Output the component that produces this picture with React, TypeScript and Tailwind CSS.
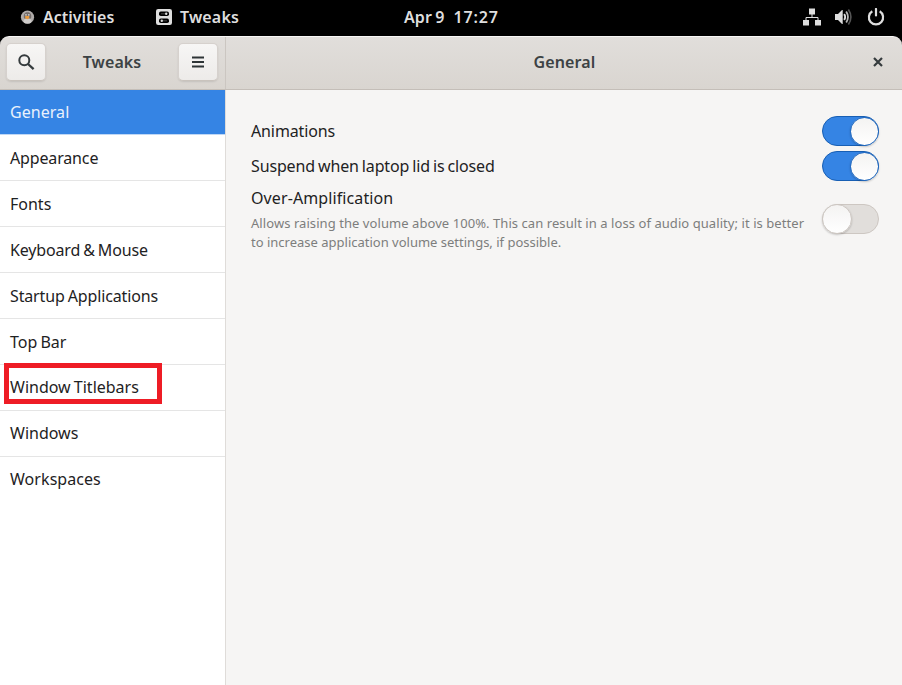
import React from "react";

const pages = [
  { label: "General", spacing: "tracking-[0.05px]" },
  { label: "Appearance", spacing: "tracking-[-0.15px]" },
  { label: "Fonts", spacing: "" },
  { label: "Keyboard & Mouse", spacing: "tracking-[-0.15px] [word-spacing:-1px]" },
  { label: "Startup Applications", spacing: "tracking-[-0.14px] [word-spacing:-1px]" },
  { label: "Top Bar", spacing: "[word-spacing:-1px]" },
  { label: "Window Titlebars", spacing: "[word-spacing:-1px]", marked: true },
  { label: "Windows", spacing: "" },
  { label: "Workspaces", spacing: "tracking-[0.06px]" },
];

function Switch({ on }: { on?: boolean }) {
  return (
    <div
      className={
        on
          ? "flex h-[30px] w-[57px] shrink-0 items-center justify-end rounded-full border border-[#185fb4] bg-[#3584e4]"
          : "flex h-[30px] w-[57px] shrink-0 items-center justify-start rounded-full border border-[#cdc7c2] bg-[#e1dedb]"
      }
    >
      <div
        className={
          on
            ? "-mr-px size-[29px] rounded-full border border-[#2268bd] bg-linear-to-b from-[#f4f3f2] to-white shadow-[0_1px_2px_rgba(0,0,0,0.2)]"
            : "-ml-px size-[30px] rounded-full border border-[#cdc7c2] bg-linear-to-b from-[#f4f3f2] to-white shadow-[0_1px_2px_rgba(0,0,0,0.2)]"
        }
      />
    </div>
  );
}

function HeaderButton({ children }: { children: React.ReactNode }) {
  return (
    <button className="flex h-[38px] w-10 items-center justify-center rounded-[5px] border border-[#d6d1cd] border-b-[#c9c3bd] bg-linear-to-b from-[#f7f6f5] to-[#edebe9] shadow-[0_1px_2px_rgba(0,0,0,0.1)]">
      {children}
    </button>
  );
}

function TopBar() {
  return (
    <div className="flex h-9 shrink-0 items-center bg-black text-[16px] leading-6 font-semibold text-[#dedede]">
      <div className="flex w-[155px] items-center pb-0.5 pl-5">
        <svg width="15" height="15" viewBox="0 0 15 15">
          <circle cx="7.5" cy="7.2" r="6.6" fill="#b0acaa" />
          <path d="M4 8.5C3 4 5 2.3 7.5 2.3S12 4 11 8.5z" fill="#736c69" />
          <ellipse cx="7.5" cy="11" rx="4" ry="2.6" fill="#cfcdcb" />
          <circle cx="6" cy="4.8" r="0.9" fill="#ccc" />
          <circle cx="8.8" cy="4.8" r="0.9" fill="#ccc" />
          <path d="M5.2 6h4v2.2l-2 1-2-1z" fill="#e99a3c" />
        </svg>
        <span className="ml-2 whitespace-nowrap">Activities</span>
      </div>
      <div className="flex w-[249px] items-center pb-0.5">
        <svg width="18" height="18" viewBox="0 0 18 18">
          <rect x="1" y="1" width="16" height="16" rx="2.2" fill="#dedede" />
          <rect x="4" y="3.6" width="10" height="4.4" rx="1.8" fill="#000" />
          <rect x="4" y="10.6" width="10" height="4.4" rx="1.8" fill="#000" />
          <path d="M6 5.8h4M8 12.8h4" stroke="#555" strokeWidth="0.8" />
          <circle cx="11.2" cy="5.8" r="1.2" fill="#dedede" />
          <circle cx="6.8" cy="12.8" r="1.2" fill="#dedede" />
        </svg>
        <span className="ml-[7px] tracking-[0.15px]">Tweaks</span>
      </div>
      <div className="flex gap-[9px] pb-0.5">
        <span className="tracking-[0.1px] [word-spacing:-1px]">Apr 9</span>
        <span className="tracking-[0.85px]">17:27</span>
      </div>
      <div className="ml-auto flex w-[99px] items-center pb-0.5">
        <svg width="18" height="18" viewBox="0 0 18 18" fill="#dedede">
          <rect x="6" y="0.5" width="6" height="6" />
          <rect x="0" y="12" width="6" height="5.5" />
          <rect x="12" y="12" width="6" height="5.5" />
          <path d="M3 12V9.5h12V12M9 6v3.5" fill="none" stroke="#dedede" />
        </svg>
        <svg className="ml-[14px]" width="18" height="18" viewBox="0 0 18 18">
          <path d="M0 6h3l4-4h.7v14H7l-4-4H0z" fill="#dedede" />
          <path d="M9.2 6q2 3 0 6" fill="none" stroke="#dedede" strokeWidth="1.8" />
          <path d="M11.2 3.5q3.5 5.5 0 11" fill="none" stroke="#b8b8b8" strokeWidth="1.8" />
          <path d="M13.4 1.5q5 7.5 0 15" fill="none" stroke="#555" strokeWidth="1.6" />
        </svg>
        <svg className="ml-[14px]" width="18" height="18" viewBox="0 0 18 18" fill="none" stroke="#dedede" strokeWidth="2.2">
          <path d="M5.3 3.3a7.1 7.1 0 1 0 7.4 0" />
          <path d="M9 1v6.5" strokeLinecap="round" />
        </svg>
      </div>
    </div>
  );
}

export default function App() {
  return (
    <div className="flex h-[685px] w-[902px] flex-col overflow-hidden bg-black font-['Noto_Sans',sans-serif]">
      <TopBar />
      <header className="flex h-[54px] shrink-0 rounded-t-[9px] border-t border-b border-t-[#f8f7f6] border-b-[#c4beb8] bg-linear-to-b from-[#e1dedb] to-[#d9d5d0] text-[16px] font-semibold text-[#3c4244]">
        <div className="flex w-[226px] items-center justify-between border-r border-[#cbc6c1] pr-[7px] pb-0.5 pl-1.5">
          <HeaderButton>
            <svg width="18" height="18" viewBox="0 0 18 18" fill="none" stroke="#353b3d" strokeWidth="2">
              <circle cx="7.3" cy="7.3" r="5" />
              <path d="M11 11l5.6 5.2" strokeWidth="2.3" />
            </svg>
          </HeaderButton>
          <span className="tracking-[0.1px]">Tweaks</span>
          <HeaderButton>
            <svg width="12" height="12" viewBox="0 0 12 12" stroke="#2e3436" strokeWidth="2">
              <path d="M0 1.5h12M0 6h12M0 10.5h12" />
            </svg>
          </HeaderButton>
        </div>
        <div className="grid flex-1 grid-cols-[1fr_auto_1fr] items-center pb-0.5">
          <span />
          <span className="pl-px tracking-[0.1px]">General</span>
          <svg className="mr-[19px] justify-self-end" width="10" height="10" viewBox="0 0 10 10" stroke="#353b3d" strokeWidth="2.2">
            <path d="M1 1l8 8M9 1L1 9" />
          </svg>
        </div>
      </header>
      <div className="flex min-h-0 flex-1">
        <nav className="w-[226px] shrink-0 border-r border-[#dfdcd9] bg-white text-[16px] text-[#1e2223]">
          {pages.map((p, i) => (
            <div
              key={p.label}
              className={
                i === 0
                  ? "flex h-[45px] items-center border-b border-[#bfd7f5] bg-[#3584e4] pl-2.5 text-[#e9f1fc]"
                  : i === pages.length - 1
                    ? "flex h-[46px] items-center pb-0.5 pl-2.5"
                    : i > 5
                      ? "relative flex h-[46px] items-center border-b border-[#e5e5e5] pb-0.5 pl-2.5"
                      : "relative flex h-[46px] items-center border-b border-[#e5e5e5] pl-2.5"
              }
            >
              <span className={p.spacing}>{p.label}</span>
              {p.marked && <div className="absolute -top-0.5 left-1 h-[41px] w-[158px] border-5 border-[#ee1c25]" />}
            </div>
          ))}
        </nav>
        <main className="flex flex-1 flex-col bg-[#f6f5f4] pt-[26px] pr-[23px] pl-[25px] text-[16px] leading-[22px] text-[#1e2223]">
          <div className="flex h-[30px] items-center justify-between">
            <span className="tracking-[-0.12px]">Animations</span>
            <Switch on />
          </div>
          <div className="mt-[5px] flex h-[30px] items-center justify-between">
            <span className="tracking-[-0.14px] [word-spacing:-1px]">Suspend when laptop lid is closed</span>
            <Switch on />
          </div>
          <div className="mt-1.5 flex items-center justify-between">
            <div>
              <div className="tracking-[0.1px]">Over-Amplification</div>
              <div className="mt-1 -mb-px pt-px text-[13px] leading-[19px] whitespace-nowrap text-[#7d7e7d]">
                <div className="tracking-[0.065px]">Allows raising the volume above 100%. This can result in a loss of audio quality; it is better</div>
                <div>to increase application volume settings, if possible.</div>
              </div>
            </div>
            <Switch />
          </div>
        </main>
      </div>
    </div>
  );
}
